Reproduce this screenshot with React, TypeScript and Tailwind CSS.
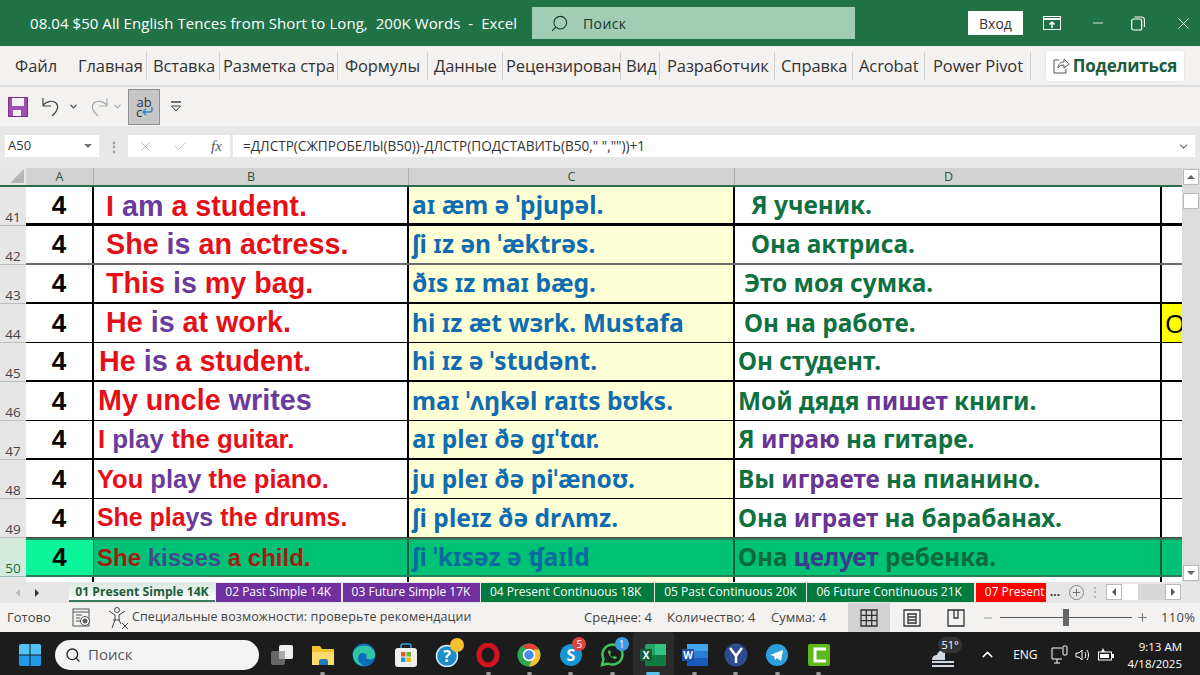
import React from "react";
import { ChevronDown, ChevronUp, Search, X, Check, Minus, Plus } from "lucide-react";

type Seg = [string, "r" | "p"];

type Row = {
  num: number;
  b: Seg[];
  bPad: string;
  bSize: string;
  c: string;
  d: Seg[];
  dPad: string;
  line: string;
};

const rows: Row[] = [
  { num: 41, b: [["I ", "r"], ["am ", "p"], ["a student.", "r"]], bPad: "pl-[12px] pt-[3px]", bSize: "text-[28.7px]", c: "aɪ æm ə ˈpjupəl.", d: [["Я ученик.", "r"]], dPad: "pl-[16px]", line: "border-b-[3px] border-black" },
  { num: 42, b: [["She ", "r"], ["is ", "p"], ["an actress.", "r"]], bPad: "pl-[12px]", bSize: "text-[28.7px]", c: "ʃi ɪz ən ˈæktrəs.", d: [["Она актриса.", "r"]], dPad: "pl-[16px]", line: "border-b-2 border-[#6b6b6b]" },
  { num: 43, b: [["This ", "r"], ["is ", "p"], ["my bag.", "r"]], bPad: "pl-[12px]", bSize: "text-[28.7px]", c: "ðɪs ɪz maɪ bæg.", d: [["Это моя сумка.", "r"]], dPad: "pl-[9px]", line: "border-b-2 border-black" },
  { num: 44, b: [["He ", "r"], ["is ", "p"], ["at work.", "r"]], bPad: "pl-[12px]", bSize: "text-[28.7px]", c: "hi ɪz æt wɜrk. Mustafa", d: [["Он на работе.", "r"]], dPad: "pl-[9px]", line: "border-b border-black" },
  { num: 45, b: [["He ", "r"], ["is ", "p"], ["a student.", "r"]], bPad: "pl-[5px]", bSize: "text-[28.7px]", c: "hi ɪz ə ˈstudənt.", d: [["Он студент.", "r"]], dPad: "pl-[3px]", line: "border-b-2 border-black" },
  { num: 46, b: [["My uncle ", "r"], ["writes", "p"]], bPad: "pl-[4px]", bSize: "text-[28.7px]", c: "maɪ ˈʌŋkəl raɪts bʊks.", d: [["Мой дядя ", "r"], ["пишет ", "p"], ["книги.", "r"]], dPad: "pl-[3px]", line: "border-b border-black" },
  { num: 47, b: [["I ", "r"], ["play ", "p"], ["the guitar.", "r"]], bPad: "pl-[4px]", bSize: "text-[25.8px]", c: "aɪ pleɪ ðə gɪˈtɑr.", d: [["Я ", "r"], ["играю ", "p"], ["на гитаре.", "r"]], dPad: "pl-[3px]", line: "border-b-2 border-black" },
  { num: 48, b: [["You ", "r"], ["play ", "p"], ["the piano.", "r"]], bPad: "pl-[3px]", bSize: "text-[25.5px]", c: "ju pleɪ ðə piˈænoʊ.", d: [["Вы ", "r"], ["играете ", "p"], ["на пианино.", "r"]], dPad: "pl-[3px]", line: "border-b border-black" },
  { num: 49, b: [["She pla", "r"], ["ys ", "p"], ["the drums.", "r"]], bPad: "pl-[3px]", bSize: "text-[24.9px]", c: "ʃi pleɪz ðə drʌmz.", d: [["Она ", "r"], ["играет ", "p"], ["на барабанах.", "r"]], dPad: "pl-[3px]", line: "border-b border-[#444]" },
];

const tabs = [
  { name: "02 Past Simple 14K", cls: "w-[125px] bg-[#7030a0]" },
  { name: "03 Future Simple 17K", cls: "w-[137px] bg-[#7030a0]" },
  { name: "04 Present Continuous 18K", cls: "w-[173px] bg-[#007a3d]" },
  { name: "05 Past Continuous 20K", cls: "w-[151px] bg-[#007a3d]" },
  { name: "06 Future Continuous 21K", cls: "w-[167px] bg-[#007a3d]" },
  { name: "07 Present", cls: "w-[70px] bg-[#ff0000]" },
];

const ribbon = [
  { name: "Главная", cls: "w-[69px] pl-[0px]" },
  { name: "Вставка", cls: "w-[73px] pl-[6px]" },
  { name: "Разметка стра", cls: "w-[118px] pl-[3px]" },
  { name: "Формулы", cls: "w-[90px] pl-[7px]" },
  { name: "Данные", cls: "w-[75px] pl-[6px]" },
  { name: "Рецензирован", cls: "w-[118px] pl-[3px]" },
  { name: "Вид", cls: "w-[39px] pl-[5px]" },
  { name: "Разработчик", cls: "w-[115px] pl-[7px]" },
  { name: "Справка", cls: "w-[78px] pl-[6px]" },
  { name: "Acrobat", cls: "w-[72px] pl-[6px]" },
  { name: "Power Pivot", cls: "w-[106px] pl-[8px]" },
];

const Cell = ({ segs, red, purple }: { segs: Seg[]; red: string; purple: string }) => (
  <>
    {segs.map(([t, k], i) => (
      <span key={i} className={k === "p" ? purple : red}>
        {t}
      </span>
    ))}
  </>
);

const RowHead = ({ n, active }: { n: number; active?: boolean }) => (
  <div
    className={
      "w-[26px] shrink-0 flex items-end justify-center text-[13.5px] leading-[16px] pb-[0px] border-b " +
      (active ? "bg-[#d3ebdd] text-[#1f6b42] border-[#9bb] " : "bg-[#e6e6e6] text-[#444] border-[#bdbdbd]")
    }
  >
    {n}
  </div>
);

const TbSlot = ({ children, dot, active }: { children: React.ReactNode; dot?: boolean; active?: boolean }) => (
  <div className={"relative w-[41.3px] h-[45px] shrink-0 flex items-center justify-center " + (active ? "bg-[#2b2b2b] rounded" : "")}>
    {children}
    {dot && <div className={"absolute bottom-[2px] h-[3px] rounded " + (active ? "w-[14px] bg-[#5cc3f0]" : "w-[5px] bg-[#9a9a9a]")}></div>}
  </div>
);

const Badge = ({ text, cls }: { text?: string; cls: string }) => (
  <div className={"absolute w-[14px] h-[14px] rounded-full text-white text-[10px] leading-[14px] text-center " + cls}>{text}</div>
);

export default function App() {
  return (
    <div className="w-[1200px] h-[675px] overflow-hidden flex flex-col bg-white font-['Open_Sans',sans-serif]">
      {/* title bar */}
      <div className="h-[46px] shrink-0 bg-[#217346] flex items-center text-white">
        <div className="w-[532px] shrink-0 pl-[30px] text-[15px] whitespace-pre tracking-[0.06px]">
          08.04 $50 All English Tences from Short to Long,  200K Words  -  Excel
        </div>
        <div className="w-[323px] h-[32px] shrink-0 bg-[#a0cdb4] flex items-center pl-[18px] gap-[14px] text-[#14372a] text-[14px] tracking-[0.4px]">
          <Search size={19} strokeWidth={1.3} className="-scale-x-100" />
          Поиск
        </div>
        <div className="ml-[113px] w-[55px] h-[24px] bg-white text-[#333] text-[14px] flex items-center justify-center">Вход</div>
        <div className="ml-[20px] w-[18px] flex justify-center">
          <svg width="18" height="14" viewBox="0 0 18 14" fill="none" stroke="white">
            <rect x="0.5" y="0.5" width="17" height="13" />
            <path d="M1 3h16" strokeWidth="2" />
            <path d="M9 12V6M6.5 8.5 9 6l2.500 2.500" strokeWidth="1.500" />
          </svg>
        </div>
        <Minus size={16} strokeWidth={1.2} className="ml-[29px]" />
        <svg width="14" height="15" viewBox="0 0 14 15" fill="none" stroke="white" strokeWidth="1.2" className="ml-[25px]">
          <rect x="0.7" y="3" width="10" height="11" rx="2" />
          <path d="M3.500 1h7a3 3 0 0 1 3 3v7" />
        </svg>
        <X size={19} strokeWidth={1.2} className="ml-[29px]" />
      </div>

      {/* ribbon tabs */}
      <div className="h-[41px] shrink-0 bg-[#f3f2f1] border-b-2 border-[#dcdcdc] flex items-center text-[16.5px] text-[#333]">
        <div className="w-[78px] h-[28px] leading-[28px] shrink-0 pl-[15px]">Файл</div>
        {ribbon.map((t) => (
          <div key={t.name} className={"h-[28px] shrink-0 overflow-hidden whitespace-nowrap border-r border-[#d0d0d0] leading-[28px] tracking-[-0.1px] " + t.cls}>
            {t.name}
          </div>
        ))}
        <div className="ml-[15px] w-[138px] h-[30px] bg-white rounded-[2px] flex items-center justify-center gap-[3px] shadow-[0_0_2px_#ccc]">
          <svg width="17" height="17" viewBox="0 0 17 17" fill="none" stroke="#555" strokeWidth="1">
            <path d="M6 3H1v13h12v-4" />
            <path d="M5 11c0-4 3-6 6-6V2l5 5-5 4V8c-3 0-5 1-6 3Z" />
          </svg>
          <span className="font-bold text-[17px] text-[#1d5c3c] tracking-[-0.2px]">Поделиться</span>
        </div>
      </div>

      {/* quick access */}
      <div className="h-[39px] shrink-0 bg-[#f3f2f1] flex items-center">
        <svg width="20" height="20" viewBox="0 0 20 20" className="ml-[8px]">
          <rect x="0.500" y="0.500" width="19" height="19" fill="#a04fb0" stroke="#7b2f8c" />
          <rect x="4" y="1" width="12" height="8" fill="#f3f2f1" />
          <rect x="5" y="13" width="8" height="6" fill="#f3f2f1" />
        </svg>
        <svg width="22" height="22" viewBox="0 0 22 22" fill="none" stroke="#444" strokeWidth="1.200" className="ml-[13px]">
          <path d="M2 2v8h8M2 9c4-4 10-5 13-2 3 3 2 8-4 13" />
        </svg>
        <ChevronDown size={11} strokeWidth={2.500} className="text-[#444] ml-[5px]" />
        <svg width="22" height="22" viewBox="0 0 22 22" fill="none" stroke="#aaa" strokeWidth="1.200" className="ml-[8px]">
          <path d="M20 2v8h-8M20 9c-4-4-10-5-13-2-3 3-2 8 4 13" />
        </svg>
        <ChevronDown size={11} strokeWidth={2.500} className="text-[#aaa] ml-[3px]" />
        <div className="ml-[5px] w-[32px] h-[36px] bg-[#c6c6c6] border border-[#8f8f8f] flex flex-col items-center justify-center text-[13px] leading-[10px] text-[#333] relative">
          <span>ab</span>
          <span className="self-start pl-[7px]">c</span>
          <svg width="11" height="9" viewBox="0 0 11 9" fill="none" stroke="#2b87d1" strokeWidth="1.400" className="absolute right-[6px] bottom-[8px]">
            <path d="M10 0v3a2 2 0 0 1-2 2H1M4 2 1 5l3 3" />
          </svg>
        </div>
        <svg width="12" height="12" viewBox="0 0 12 12" className="ml-[10px]">
          <path d="M1 1h10" stroke="#444" strokeWidth="1.500" />
          <path d="M1.500 5h9L6 10Z" fill="none" stroke="#444" />
        </svg>
      </div>

      {/* formula bar */}
      <div className="h-[42px] shrink-0 bg-[#e8e8e8] flex items-start pt-[9px]">
        <div className="ml-[5px] w-[94px] h-[22px] bg-white flex items-center justify-between px-[3px] text-[13px] text-[#333] shrink-0">
          A50
          <span className="w-0 h-0 mr-[4px] border-x-[4px] border-x-transparent border-t-[4px] border-t-[#777]"></span>
        </div>
        <div className="w-[29px] h-[22px] shrink-0 flex items-center justify-center text-[#999] text-[14px] font-bold">⋮</div>
        <div className="w-[102px] h-[22px] bg-white shrink-0 flex items-center pl-[10px] gap-[20px] text-[#aaa]">
          <X size={15} strokeWidth={1.300} />
          <Check size={15} strokeWidth={1.300} />
          <span className="font-['Liberation_Serif',serif] italic text-[15px] text-[#555] ml-[3px]">fx</span>
        </div>
        <div className="ml-[3px] w-[962px] h-[22px] bg-white shrink-0 flex items-center justify-between pl-[10px] pr-[5px] text-[#333] text-[13.6px]">
          {'=ДЛСТР(СЖПРОБЕЛЫ(B50))-ДЛСТР(ПОДСТАВИТЬ(B50," ",""))+1'}
          <ChevronDown size={13} className="text-[#666]" />
        </div>
      </div>

      {/* sheet */}
      <div className="h-[414px] shrink-0 flex">
        <div className="w-[1182px] shrink-0 flex flex-col">
          {/* column headers */}
          <div className="h-[19px] shrink-0 flex bg-[#d2d2d2] text-[12.5px] text-[#33503f] border-b-2 border-[#2d6a4a]">
            <div className="w-[26px] bg-[#e6e6e6] flex items-end justify-end pr-[2px] pb-[2px] shrink-0">
              <div className="w-0 h-0 border-l-[14px] border-l-transparent border-b-[14px] border-b-[#b5b5b5]"></div>
            </div>
            <div className="w-[68px] text-center border-r border-[#aeaeae] shrink-0">A</div>
            <div className="w-[315px] text-center border-r border-[#aeaeae] shrink-0">B</div>
            <div className="w-[326px] text-center border-r border-[#aeaeae] shrink-0">C</div>
            <div className="w-[427px] text-center shrink-0">D</div>
          </div>

          {rows.map((r) => (
            <div key={r.num} className="h-[39px] shrink-0 flex">
              <RowHead n={r.num} />
              <div className={"flex flex-1 " + r.line}>
                <div className="w-[68px] shrink-0 border-r-2 border-black flex items-center justify-center font-['Liberation_Sans',sans-serif] font-bold text-[26px] text-black">4</div>
                <div className={"w-[315px] shrink-0 border-r-2 border-black flex items-center whitespace-pre font-['Liberation_Sans',sans-serif] font-bold " + r.bSize + " " + r.bPad}>
                  <Cell segs={r.b} red="text-[#e60f17]" purple="text-[#6a3a9c]" />
                </div>
                <div className="w-[326px] shrink-0 border-r-2 border-black bg-[#ffffd5] flex items-center pl-[3px] whitespace-pre font-['Noto_Sans',sans-serif] font-bold text-[24.6px] text-[#0f6cb0]">
                  {r.c}
                </div>
                <div className={"w-[427px] shrink-0 border-r-2 border-black flex items-center whitespace-pre font-['Noto_Sans',sans-serif] font-bold text-[24.4px] " + r.dPad}>
                  <Cell segs={r.d} red="text-[#0f7040]" purple="text-[#6a3494]" />
                </div>
                <div className={"flex-1 flex items-center overflow-hidden pl-[3px] text-[26px] text-black " + (r.num === 44 ? "bg-[#ffff00]" : "")}>
                  {r.num === 44 ? "О" : ""}
                </div>
              </div>
            </div>
          ))}

          {/* selected row */}
          <div className="h-[39px] shrink-0 flex">
            <RowHead n={50} active />
            <div className="flex flex-1 bg-[#00c277] border-y-2 border-[#2b7f58]">
              <div className="w-[68px] shrink-0 bg-[#0cf59c] border-r border-[#1b6e48] flex items-center justify-center font-['Liberation_Sans',sans-serif] font-bold text-[26px] text-black">4</div>
              <div className="w-[315px] shrink-0 border-r-2 border-[#175c3b] flex items-center pl-[3px] whitespace-pre font-['Liberation_Sans',sans-serif] font-bold text-[24px]">
                <span className="text-[#a11d12]">She </span>
                <span className="text-[#3f4a8f]">kisses </span>
                <span className="text-[#a11d12]">a child.</span>
              </div>
              <div className="w-[326px] shrink-0 border-r-2 border-[#175c3b] flex items-center pl-[3px] whitespace-pre font-['Noto_Sans',sans-serif] font-bold text-[24.6px] text-[#0a6aa0]">ʃi ˈkɪsəz ə ʧaɪld</div>
              <div className="w-[427px] shrink-0 border-r-2 border-[#175c3b] flex items-center pl-[3px] whitespace-pre font-['Noto_Sans',sans-serif] font-bold text-[24.4px]">
                <span className="text-[#0c6a3c]">Она </span>
                <span className="text-[#3a3c8c]">целует </span>
                <span className="text-[#0c6a3c]">ребенка.</span>
              </div>
              <div className="flex-1"></div>
            </div>
          </div>

          {/* sliver of row 51 */}
          <div className="flex-1 flex">
            <div className="w-[26px] bg-[#e6e6e6] shrink-0"></div>
            <div className="w-[68px] border-r-2 border-black shrink-0"></div>
            <div className="w-[315px] border-r-2 border-black shrink-0"></div>
            <div className="w-[326px] border-r-2 border-black bg-[#ffffd5] shrink-0"></div>
            <div className="w-[427px] border-r-2 border-black shrink-0"></div>
          </div>
        </div>

        {/* vertical scrollbar */}
        <div className="w-[18px] shrink-0 bg-[#dcdcdc] flex flex-col items-center">
          <div className="w-[16px] h-[16px] mt-[1px] bg-white border border-[#bbb] flex items-center justify-center">
            <div className="w-0 h-0 border-x-[4px] border-x-transparent border-b-[4px] border-b-[#666]"></div>
          </div>
          <div className="w-[16px] h-[16px] mt-[8px] bg-white border border-[#bbb]"></div>
          <div className="flex-1"></div>
          <div className="w-[16px] h-[16px] mb-[1px] bg-white border border-[#bbb] flex items-center justify-center">
            <div className="w-0 h-0 border-x-[4px] border-x-transparent border-t-[4px] border-t-[#666]"></div>
          </div>
        </div>
      </div>

      {/* sheet tabs */}
      <div className="h-[21px] shrink-0 bg-[#e6e6e6] flex items-start pt-[1px] text-[12px] whitespace-nowrap">
        <div className="w-[69px] h-[19px] shrink-0 flex items-center pl-[16px] gap-[15px]">
          <div className="w-0 h-0 border-y-[4px] border-y-transparent border-r-[4px] border-r-[#bbb]"></div>
          <div className="w-0 h-0 border-y-[4px] border-y-transparent border-l-[4px] border-l-[#333]"></div>
        </div>
        <div className="w-[146px] h-[19px] shrink-0 bg-gradient-to-b from-[#d9e8e0] to-white border-b-2 border-[#3c7a5a] text-[#1d5c3c] font-bold text-center leading-[17px] text-[12.2px]">
          01 Present Simple 14K
        </div>
        {tabs.map((t) => (
          <div key={t.name} className={"h-[19px] shrink-0 overflow-hidden ml-[1.300px] text-white pl-[9px] leading-[18px] " + t.cls}>
            {t.name}
          </div>
        ))}
        <div className="ml-[4px] w-[17px] h-[19px] leading-[18px] text-[#333] font-bold shrink-0">...</div>
        <div className="w-[15px] h-[15px] mt-[2px] ml-[2px] rounded-full border border-[#888] flex items-center justify-center shrink-0">
          <Plus size={11} className="text-[#666]" />
        </div>
        <div className="w-[22px] h-[19px] leading-[18px] text-center text-[#999] shrink-0">⋮</div>
        <div className="w-[16px] h-[16px] mt-[1px] bg-white border border-[#bbb] flex items-center justify-center shrink-0">
          <div className="w-0 h-0 border-y-[4px] border-y-transparent border-r-[4px] border-r-[#555]"></div>
        </div>
        <div className="w-[16px] h-[16px] mt-[1px] bg-white shrink-0"></div>
        <div className="w-[27px] h-[16px] mt-[1px] bg-[#d8d8d8] shrink-0"></div>
        <div className="w-[16px] h-[16px] mt-[1px] bg-white border border-[#bbb] flex items-center justify-center shrink-0">
          <div className="w-0 h-0 border-y-[4px] border-y-transparent border-l-[4px] border-l-[#555]"></div>
        </div>
      </div>

      {/* status bar */}
      <div className="h-[29px] shrink-0 bg-[#f3f2f1] flex items-center text-[13px] text-[#444] whitespace-nowrap">
        <div className="w-[72px] pl-[7px] shrink-0">Готово</div>
        <svg width="20" height="20" viewBox="0 0 20 20" fill="none" stroke="#555" strokeWidth="1" className="shrink-0">
          <rect x="1" y="1" width="16" height="17" />
          <path d="M1 4h16M4 7h6M4 10h4M4 13h4" />
          <circle cx="13" cy="13" r="4.500" fill="#f3f2f1" />
          <circle cx="13" cy="13" r="2" fill="#555" />
        </svg>
        <svg width="22" height="24" viewBox="0 0 22 24" fill="none" stroke="#444" strokeWidth="1" className="ml-[16px] shrink-0">
          <circle cx="9" cy="4" r="2.500" />
          <path d="M1 5l6 4v5l-3 8M17 5l-6 4v5l2 4M5 14h7" />
          <path d="M14 17l6 6M20 17l-6 6" />
        </svg>
        <span className="w-[454px] shrink-0 pl-[2px] text-[12.5px] tracking-[0.1px]">Специальные возможности: проверьте рекомендации</span>
        <span className="w-[83px] shrink-0">Среднее: 4</span>
        <span className="w-[104px] shrink-0">Количество: 4</span>
        <span className="w-[77px] shrink-0">Сумма: 4</span>
        <div className="w-[42px] h-[29px] bg-[#d2d2d2] flex items-center justify-center shrink-0">
          <svg width="18" height="18" viewBox="0 0 18 18" fill="none" stroke="#333" strokeWidth="1.300">
            <path d="M1 1h16v16H1zM1 6.300h16M1 11.700h16M6.300 1v16M11.700 1v16" />
          </svg>
        </div>
        <svg width="18" height="18" viewBox="0 0 18 18" fill="none" stroke="#333" strokeWidth="1.300" className="ml-[13px] shrink-0">
          <path d="M1 1h16v16H1zM5 5h8M5 8h8M5 11h8M5 14h8M5 4v11M13 4v11" />
        </svg>
        <svg width="18" height="18" viewBox="0 0 18 18" fill="none" stroke="#333" strokeWidth="1.300" className="ml-[26px] shrink-0">
          <path d="M1 1h16v16H1zM7 1v8h4V1" />
        </svg>
        <Minus size={12} className="ml-[17px] text-[#999] shrink-0" />
        <div className="relative w-[132px] h-[1px] ml-[6px] bg-[#555] shrink-0">
          <div className="absolute left-[63px] -top-[8px] w-[6px] h-[17px] bg-[#666]"></div>
        </div>
        <Plus size={13} className="ml-[4px] text-[#777] shrink-0" />
        <span className="ml-[12px] shrink-0 tracking-[0.3px]">110%</span>
      </div>

      {/* taskbar */}
      <div className="flex-1 bg-[#1c1c1c] flex items-center text-white">
        <svg width="22" height="22" viewBox="0 0 22 22" className="ml-[19px] shrink-0">
          <path d="M0 2a2 2 0 0 1 2-2h8.500v10.500H0Z" fill="#4fc3f7" />
          <path d="M11.500 0H20a2 2 0 0 1 2 2v8.500H11.500Z" fill="#4fc3f7" />
          <path d="M0 11.500h10.500V22H2a2 2 0 0 1-2-2Z" fill="#1e9be8" />
          <path d="M11.500 11.500H22V20a2 2 0 0 1-2 2h-8.500Z" fill="#1e9be8" />
        </svg>
        <div className="ml-[14px] w-[204px] h-[30px] bg-[#f3f3f3] rounded-full shrink-0 flex items-center pl-[10px] gap-[7px] text-[#555] text-[15px]">
          <Search size={16} className="text-[#222] shrink-0" />
          Поиск
        </div>
        <div className="ml-[2px] flex items-center shrink-0">
          <TbSlot>
            <svg width="24" height="24" viewBox="0 0 24 24">
              <rect x="1" y="8" width="14" height="14" rx="2" fill="#666" />
              <rect x="9" y="2" width="14" height="14" rx="2" fill="#eee" />
              <rect x="9" y="8" width="6" height="8" fill="#aaa" />
            </svg>
          </TbSlot>
          <TbSlot dot>
            <svg width="24" height="24" viewBox="0 0 24 24">
              <path d="M1 3h8l2 3h12v16H1Z" fill="#f2c230" />
              <path d="M1 9h22v13H1Z" fill="#ffdb6e" />
              <path d="M8 22v-4a2 2 0 0 1 2-2h5a2 2 0 0 1 2 2v4Z" fill="#1f7fc4" />
            </svg>
          </TbSlot>
          <TbSlot>
            <svg width="24" height="24" viewBox="0 0 24 24">
              <circle cx="12" cy="12" r="11.500" fill="#0f6cbd" />
              <path d="M1 10C4 1 20-1 23 11c1 5-6 7-9 4 3-4-4-7-7-3-2 3-1 8 5 11C5 23 0 17 1 10Z" fill="#2fc6a0" />
            </svg>
          </TbSlot>
          <TbSlot>
            <svg width="22" height="24" viewBox="0 0 22 24">
              <path d="M6 6V3a2 2 0 0 1 2-2h6a2 2 0 0 1 2 2v3" fill="none" stroke="#3aa0e0" strokeWidth="1.500" />
              <rect x="0" y="5" width="22" height="19" rx="3" fill="#eee" />
              <rect x="6" y="9" width="4.500" height="4.500" fill="#e8562a" />
              <rect x="11.500" y="9" width="4.500" height="4.500" fill="#6ab82a" />
              <rect x="6" y="14.500" width="4.500" height="4.500" fill="#1b9ae0" />
              <rect x="11.500" y="14.500" width="4.500" height="4.500" fill="#f5b90f" />
            </svg>
          </TbSlot>
          <TbSlot>
            <svg width="24" height="24" viewBox="0 0 24 24">
              <circle cx="12" cy="13" r="10.500" fill="#1c8fca" stroke="#d8eef8" strokeWidth="1.500" />
              <text x="12" y="19" fontSize="16" fontWeight="bold" fill="white" textAnchor="middle">?</text>
            </svg>
            <Badge cls="top-[6px] right-[3px] bg-[#f7c02c]" />
          </TbSlot>
          <TbSlot dot>
            <svg width="24" height="24" viewBox="0 0 24 24">
              <ellipse cx="12" cy="12" rx="9" ry="10" fill="none" stroke="#d31420" strokeWidth="5" />
            </svg>
          </TbSlot>
          <TbSlot dot>
            <svg width="24" height="24" viewBox="0 0 24 24">
              <circle cx="12" cy="12" r="11.500" fill="#2fa84f" />
              <path d="M12 .5A11.500 11.500 0 0 1 22 6.500H12L5 4A11.500 11.500 0 0 1 12 .5Z" fill="#e14133" />
              <path d="M22 6.500A11.500 11.500 0 0 1 12 23.500l5-11V6.500Z" fill="#f7c02c" />
              <circle cx="12" cy="12" r="5.500" fill="#4a89e8" stroke="white" strokeWidth="1.500" />
            </svg>
          </TbSlot>
          <TbSlot dot>
            <svg width="24" height="24" viewBox="0 0 24 24">
              <path d="M12 1a11 11 0 0 1 11 11c0 6-5 11-11 11A11 11 0 0 1 1 12C1 6 6 1 12 1Z" fill="#1597d6" />
              <text x="12" y="18" fontSize="16" fontWeight="bold" fill="white" textAnchor="middle">S</text>
            </svg>
            <Badge text="5" cls="top-[5px] right-[5px] bg-[#d9453c]" />
          </TbSlot>
          <TbSlot dot>
            <svg width="24" height="24" viewBox="0 0 24 24" fill="none">
              <path d="M2 22l1.500-6A10 10 0 1 1 8 20.500Z" stroke="#3fc45a" strokeWidth="2.500" />
              <path d="M8 8c0 4 4 8 8 8l1-2-3-1-1 1c-1 0-3-2-3-3l1-1-1-3Z" fill="#3fc45a" />
            </svg>
            <Badge text="1" cls="top-[5px] right-[4px] bg-[#3a9ce8]" />
          </TbSlot>
          <TbSlot dot active>
            <svg width="26" height="24" viewBox="0 0 26 24">
              <rect x="5" y="1" width="21" height="22" rx="2" fill="#21a366" />
              <rect x="15" y="1" width="11" height="11" fill="#33c481" />
              <rect x="5" y="12" width="21" height="11" fill="#107c41" />
              <rect x="0" y="6" width="12" height="12" rx="1" fill="#185c37" />
              <text x="6" y="16" fontSize="10" fontWeight="bold" fill="white" textAnchor="middle">X</text>
            </svg>
          </TbSlot>
          <TbSlot dot>
            <svg width="26" height="24" viewBox="0 0 26 24">
              <rect x="5" y="1" width="21" height="22" rx="2" fill="#2b7cd3" />
              <rect x="5" y="1" width="21" height="7" fill="#41a5ee" />
              <rect x="5" y="15" width="21" height="8" fill="#185abd" />
              <rect x="0" y="6" width="12" height="12" rx="1" fill="#1a4fa5" />
              <text x="6" y="16" fontSize="10" fontWeight="bold" fill="white" textAnchor="middle">W</text>
            </svg>
          </TbSlot>
          <TbSlot dot>
            <svg width="24" height="24" viewBox="0 0 24 24">
              <circle cx="12" cy="12" r="11.500" fill="#2f4a8f" />
              <path d="M6 5l6 8 6-8M12 13v7" fill="none" stroke="white" strokeWidth="2.500" />
            </svg>
          </TbSlot>
          <TbSlot dot>
            <svg width="24" height="24" viewBox="0 0 24 24">
              <circle cx="12" cy="12" r="11" fill="#2aa1dc" />
              <path d="M5 12l13-5-2 11-4-3-2 2-1-4Z" fill="white" />
            </svg>
          </TbSlot>
          <TbSlot dot>
            <svg width="24" height="24" viewBox="0 0 24 24">
              <rect x="1" y="1" width="22" height="22" rx="2" fill="#5fb81c" />
              <path d="M19 6H8v12h11" fill="none" stroke="white" strokeWidth="3" />
            </svg>
          </TbSlot>
        </div>
        <div className="relative ml-[91px] w-[26px] h-[26px] shrink-0">
          <svg width="26" height="26" viewBox="0 0 26 26">
            <path d="M2 18c0-4 3-5 5-5 1-4 5-6 8-4v9Z" fill="#cfd8e0" />
            <path d="M2 20h22M2 24h22" stroke="#cfd8e0" strokeWidth="2" />
          </svg>
          <div className="absolute -top-[5px] left-[8px] w-[24px] h-[16px] rounded-full bg-[#333] text-[11px] leading-[16px] text-center">51°</div>
        </div>
        <ChevronUp size={17} className="ml-[23px] shrink-0" />
        <span className="ml-[17px] text-[12px] shrink-0">ENG</span>
        <svg width="18" height="20" viewBox="0 0 18 20" fill="none" stroke="white" strokeWidth="1" className="ml-[13px] shrink-0">
          <path d="M11 3H1v11h10M6 14v4M3 18h6" />
          <rect x="12" y="1" width="4" height="9" rx="1" />
        </svg>
        <svg width="16" height="16" viewBox="0 0 16 16" fill="none" stroke="white" strokeWidth="1" className="ml-[6px] shrink-0">
          <path d="M1 6v4h3l3 3V3L4 6ZM10 5c1 2 1 4 0 6M12 3c2 3 2 7 0 10" />
        </svg>
        <svg width="16" height="14" viewBox="0 0 16 14" className="ml-[7px] shrink-0">
          <rect x="0.500" y="4" width="13" height="8" fill="none" stroke="white" />
          <rect x="2" y="6" width="9" height="4" fill="white" />
          <path d="M14 6h2v4h-2ZM5 0l-2 4h4Z" fill="white" />
        </svg>
        <div className="flex-1 flex flex-col items-end pr-[18px] text-[11.5px] leading-[17px]">
          <span>9:13 AM</span>
          <span>4/18/2025</span>
        </div>
      </div>
    </div>
  );
}
